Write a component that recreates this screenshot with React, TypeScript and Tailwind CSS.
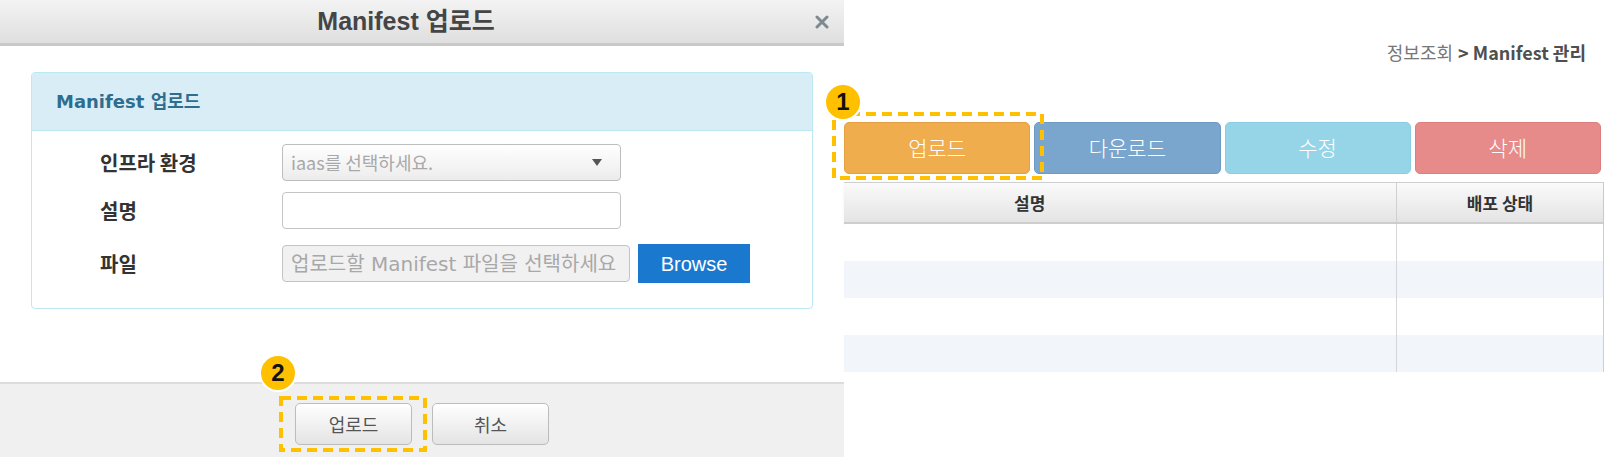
import React from 'react';

const sans = "font-['Liberation_Sans','Noto_Sans_CJK_KR',sans-serif]";
const kr = "font-['Noto_Sans_CJK_KR','Liberation_Sans',sans-serif]";

const Badge: React.FC<{ n: string; className: string }> = ({ n, className }) => (
  <div
    className={`absolute w-[38px] h-[38px] rounded-full bg-[#ffc000] border-[2px] border-white flex items-center justify-center text-[24px] font-bold text-[#111] ${sans} ${className}`}
  >
    {n}
  </div>
);

const DashedBox: React.FC<{ w: number; h: number; className: string }> = ({ w, h, className }) => (
  <svg className={`absolute ${className}`} width={w} height={h} viewBox={`0 0 ${w} ${h}`}>
    <rect x={2} y={2} width={w - 4} height={h - 4} fill="none" stroke="#ffc000" strokeWidth={4} strokeDasharray="10 6" />
  </svg>
);

const Dialog: React.FC = () => (
  <div className="w-[844px] h-full flex flex-col shrink-0 bg-white">
    <div className="h-[46px] shrink-0 bg-gradient-to-b from-[#f3f3f3] to-[#dfdfdf] border-b-[3px] border-[#c9c9c9] flex items-center justify-center pr-[32px] relative">
      <span className={`text-[25px] font-bold text-[#454545] ${sans}`}>Manifest 업로드</span>
      <svg className="absolute right-[15px] top-[15px]" width="14" height="14" viewBox="0 0 14 14">
        <path d="M2 2 L12 12 M12 2 L2 12" stroke="#7d8a92" strokeWidth="3" strokeLinecap="round" />
      </svg>
    </div>
    <div className="flex-1 px-[31px] pt-[26px]">
      <div className="border border-[#bce8f1] rounded-[4px] h-[237px] overflow-hidden">
        <div className="h-[58px] bg-[#d9edf7] border-b border-[#bce8f1] flex items-center px-[24px]">
          <span className="text-[18px] font-bold text-[#2f6d8e] font-['DejaVu_Sans','Noto_Sans_CJK_KR',sans-serif]">
            Manifest 업로드
          </span>
        </div>
        <div className={`pl-[68px] pt-[13px] flex flex-col text-[20px] font-semibold text-[#333] ${kr}`}>
          <div className="flex items-center h-[37px]">
            <span className="w-[182px]">인프라 환경</span>
            <div className="w-[339px] h-[37px] rounded-[4px] border border-[#bdbdbd] bg-gradient-to-b from-white to-[#ececec] flex items-center justify-between pl-[8px] pr-[18px]">
              <span className="text-[18px] font-normal text-[#a8a8a8]">iaas를 선택하세요.</span>
              <svg width="10" height="7" viewBox="0 0 10 7">
                <path d="M0 0 H10 L5 7 Z" fill="#555" />
              </svg>
            </div>
          </div>
          <div className="flex items-center h-[37px] mt-[11px]">
            <span className="w-[182px]">설명</span>
            <div className="w-[339px] h-[37px] rounded-[4px] border border-[#c4c4c4] bg-white" />
          </div>
          <div className="flex items-center h-[39px] mt-[15px]">
            <span className="w-[182px]">파일</span>
            <div className="w-[348px] h-[37px] rounded-[4px] border border-[#c4c4c4] bg-[#f1f1f1] flex items-center pl-[8px] overflow-hidden whitespace-nowrap">
              <span className="text-[20px] font-normal text-[#a8a8a8] font-['DejaVu_Sans','Noto_Sans_CJK_KR',sans-serif]">
                업로드할 Manifest 파일을 선택하세요
              </span>
            </div>
            <div className={`ml-[8px] w-[112px] h-[39px] bg-[#1b78cf] text-white text-[20px] font-normal flex items-center justify-center ${sans}`}>
              Browse
            </div>
          </div>
        </div>
      </div>
    </div>
    <div className="h-[75px] shrink-0 bg-[#f0f0f0] border-t-[2px] border-[#dcdcdc] flex justify-center gap-[20px] pt-[19px]">
      {['업로드', '취소'].map((t) => (
        <div
          key={t}
          className={`w-[117px] h-[42px] rounded-[5px] border border-[#bcbcbc] bg-gradient-to-b from-white to-[#e4e4e4] flex items-center justify-center text-[18px] text-[#555] ${kr}`}
        >
          {t}
        </div>
      ))}
    </div>
  </div>
);

const actions = [
  { label: '업로드', cls: 'bg-[#efad4e] border-[#e5a040]' },
  { label: '다운로드', cls: 'bg-[#7aa6cd] border-[#6e9bc3]' },
  { label: '수정', cls: 'bg-[#96d5e8] border-[#8acde2]' },
  { label: '삭제', cls: 'bg-[#e78b8a] border-[#dd7f7e]' },
];

const Page: React.FC = () => (
  <div className="flex-1 bg-white pr-[8px]">
    <div className={`h-[66px] flex justify-end items-start pt-[39px] pr-[18px] text-[18px] ${kr}`}>
      <span className="text-[#777]">정보조회</span>
      <span className="font-bold text-[#4f4f4f] ml-[5px]">{'>'} Manifest 관리</span>
    </div>
    <div className="grid grid-cols-4 gap-[4px] mt-[56px] pr-[3px]">
      {actions.map((a) => (
        <div
          key={a.label}
          className={`h-[52px] rounded-[5px] border flex items-center justify-center text-white text-[21px] font-light ${kr} ${a.cls}`}
        >
          {a.label}
        </div>
      ))}
    </div>
    <div className="mt-[8px] border-t border-r border-[#cfcfcf]">
      <div className={`flex h-[41px] bg-gradient-to-b from-[#fafafa] to-[#e4e4e4] border-b-[2px] border-[#cdcdcd] text-[17px] font-semibold text-[#333] ${kr} shadow-[0_2px_3px_rgba(0,0,0,0.06)]`}>
        <div className="flex-1 flex items-center pl-[170px]">설명</div>
        <div className="w-[207px] border-l border-[#d0d0d0] flex items-center justify-center">배포 상태</div>
      </div>
      {[0, 1, 2, 3].map((i) => (
        <div key={i} className={`flex h-[37px] ${i % 2 === 1 ? 'bg-[#f2f5fa]' : 'bg-white'}`}>
          <div className="flex-1" />
          <div className="w-[207px] border-l border-[#d6d6d6]" />
        </div>
      ))}
    </div>
  </div>
);

export default function App() {
  return (
    <div className="relative flex w-[1612px] h-[457px] overflow-hidden bg-white">
      <Dialog />
      <Page />
      <DashedBox w={212} h={68} className="left-[832px] top-[112px]" />
      <DashedBox w={148} h={56} className="left-[279px] top-[396px]" />
      <Badge n="1" className="left-[824px] top-[83px]" />
      <Badge n="2" className="left-[259px] top-[354px]" />
    </div>
  );
}
